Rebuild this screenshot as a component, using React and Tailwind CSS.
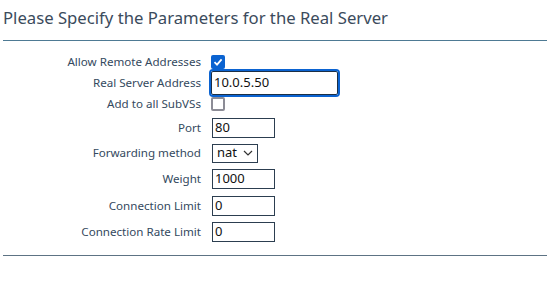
import { useState } from "react";

function Row({ label, h, children }) {
  return (
    <div className={`flex items-center ${h}`}>
      <div className="w-[201px] shrink-0 text-right text-[11.6px] text-[#34495e]">{label}</div>
      <div className="ml-[10px] flex items-center">{children}</div>
    </div>
  );
}

function Box({ checked }) {
  return checked ? (
    <span className="flex h-[14px] w-[14px] items-center justify-center rounded-[2px] bg-[#0b63d1]">
      <svg width="10" height="10" viewBox="0 0 10 10">
        <path d="M1.5 5.2 L4 7.6 L8.6 2.4" fill="none" stroke="white" strokeWidth="1.8" />
      </svg>
    </span>
  ) : (
    <span className="h-[14px] w-[14px] rounded-[2px] border-2 border-[#8c8c96] bg-white" />
  );
}

function Field({ value }) {
  return (
    <div className="ml-[1px] flex h-[20px] w-[63px] items-center border border-[#2c3e50] px-[2px] text-[13px] text-[#111]">
      {value}
    </div>
  );
}

export default function App() {
  const [data] = useState({ addr: "10.0.5.50", port: "80", weight: "1000", conn: "0", rate: "0" });

  return (
    <div className="h-[282px] w-[547px] bg-white font-['Noto_Sans',sans-serif]">
      <div className="ml-[3px] h-[41px] border-b border-[#4e7a94] pt-[6px] text-[16.7px] leading-[24px] text-[#3b4b5c]">
        Please Specify the Parameters for the Real Server
      </div>
      <div className="pt-[10px]">
        <Row label="Allow Remote Addresses" h="h-[21px]">
          <Box checked />
        </Row>
        <Row label="Real Server Address" h="h-[22px]">
          <div className="flex h-[24px] w-[127px] items-center rounded-[2px] border border-[#1c2f45] px-[2px] text-[13px] text-[#111] outline-2 outline-[#0b63d1]">
            {data.addr}
          </div>
        </Row>
        <Row label="Add to all SubVSs" h="h-[20px]">
          <Box />
        </Row>
        <Row label="Port" h="h-[27px]">
          <Field value={data.port} />
        </Row>
        <Row label="Forwarding method" h="h-[24px]">
          <div className="ml-[1px] flex h-[19px] w-[46px] items-center justify-between border border-[#2c3e50] pl-[4px] pr-[4px] text-[13px] text-[#111]">
            nat
            <svg width="10" height="6" viewBox="0 0 10 6">
              <path d="M1 1 L5 5 L9 1" fill="none" stroke="#333" strokeWidth="1.2" />
            </svg>
          </div>
        </Row>
        <Row label="Weight" h="h-[28px]">
          <Field value={data.weight} />
        </Row>
        <Row label="Connection Limit" h="h-[26px]">
          <Field value={data.conn} />
        </Row>
        <Row label="Connection Rate Limit" h="h-[26px]">
          <Field value={data.rate} />
        </Row>
      </div>
      <div className="ml-[3px] mt-[10px] border-b border-[#5d7384]" />
    </div>
  );
}
